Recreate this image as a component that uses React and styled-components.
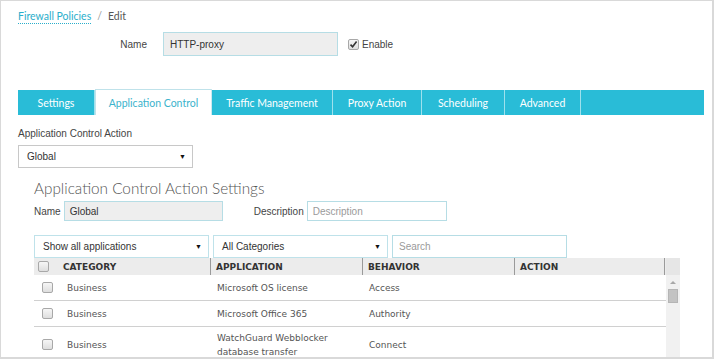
import React from "react";
import styled, { createGlobalStyle } from "styled-components";

const Global = createGlobalStyle`
  html, body { margin: 0; padding: 0; background: #fff; }
  body { font-family: "Liberation Sans", Arial, sans-serif; }
  * { box-sizing: border-box; }
`;

const Frame = styled.div`
  width: 714px;
  height: 359px;
  overflow: hidden;
  border: 2px solid #d9d9d9;
  border-top-width: 1px;
  border-left-width: 1px;
  padding: 9px 0 0 17px;
  background: #fff;
`;

const Breadcrumb = styled.div`
  font-family: Lato, sans-serif;
  font-size: 10.5px;
  line-height: 13px;
  color: #555;
  display: flex;
  gap: 6px;
`;

const Crumb = styled.a`
  color: #2aaecb;
  text-decoration: none;
  border-bottom: 1px dotted #2aaecb;
`;

const Sep = styled.span`
  color: #999;
`;

const NameRow = styled.div`
  display: flex;
  align-items: center;
  margin-top: 8px;
  height: 24px;
`;

const RightLabel = styled.label`
  width: 129px;
  text-align: right;
  font-size: 10px;
  color: #444;
  margin-right: 16px;
`;

const Input = styled.div`
  width: ${(p) => p.w}px;
  height: ${(p) => p.h}px;
  border: 1px solid #b6dde5;
  background: ${(p) => (p.disabled ? "#eeeeee" : "#fff")};
  font-size: 10px;
  color: ${(p) => (p.placeholder ? "#9a9a9a" : "#333")};
  display: flex;
  align-items: center;
  padding-left: ${(p) => p.pl || 6}px;
`;

const CheckLabel = styled.label`
  display: flex;
  align-items: center;
  gap: 3px;
  margin-left: 10px;
  font-size: 10px;
  color: #444;
`;

const Box = styled.span`
  display: inline-flex;
  align-items: center;
  justify-content: center;
  width: 11px;
  height: 11px;
  border: 1px solid #a8a8a8;
  border-radius: 2px;
  background: linear-gradient(#f6f6f6, #dedede);
  flex: none;
`;

const Checkbox = ({ checked }) => (
  <Box>
    {checked && (
      <svg width="9" height="9" viewBox="0 0 9 9">
        <path d="M1.5 4.6 L3.6 6.8 L7.6 1.6" fill="none" stroke="#333" strokeWidth="1.6" />
      </svg>
    )}
  </Box>
);

const TabBar = styled.div`
  margin-top: 34px;
  width: 686px;
  height: 25px;
  background: #29bcd7;
  display: flex;
`;

const Tab = styled.div`
  width: ${(p) => p.w}px;
  height: ${(p) => (p.active ? 26 : 25)}px;
  margin-top: ${(p) => (p.active ? -1 : 0)}px;
  display: flex;
  align-items: center;
  justify-content: center;
  font-family: Lato, sans-serif;
  font-size: 10.5px;
  color: ${(p) => (p.active ? "#3bb3cc" : "#fff")};
  background: ${(p) => (p.active ? "#fff" : "transparent")};
  border-right: 1px solid ${(p) => (p.active ? "#cfe9ef" : "rgba(255,255,255,0.55)")};
  border-top: ${(p) => (p.active ? "1px solid #bfe2ea" : "none")};
  border-left: ${(p) => (p.active ? "1px solid #bfe2ea" : "none")};
  padding-top: ${(p) => (p.active ? 1 : 0)}px;
`;

const FieldLabel = styled.div`
  margin-top: 13px;
  font-size: 10px;
  line-height: 12px;
  color: #444;
`;

const Select = styled.div`
  width: ${(p) => p.w}px;
  height: 23px;
  border: 1px solid ${(p) => p.border || "#c8c8c8"};
  background: #fff;
  display: flex;
  align-items: center;
  justify-content: space-between;
  padding: 0 6px 0 ${(p) => p.pl || 8}px;
  font-size: 10px;
  color: #333;
  margin-top: ${(p) => p.mt || 0}px;
`;

const Arrow = styled.span`
  font-size: 7px;
  color: #111;
`;

const Section = styled.div`
  padding-left: 16px;
`;

const Heading = styled.h2`
  margin: 10px 0 0;
  font-family: Lato, sans-serif;
  font-weight: 300;
  font-size: 15.3px;
  line-height: 20px;
  color: #555;
`;

const InlineRow = styled.div`
  display: flex;
  align-items: center;
  margin-top: ${(p) => p.mt}px;
  gap: ${(p) => p.gap || 0}px;
`;

const SmallLabel = styled.label`
  font-size: 10px;
  color: #444;
  margin-right: 3px;
  margin-left: ${(p) => p.ml || 0}px;
`;

const Table = styled.div`
  width: 646px;
  display: grid;
  grid-template-columns: 1fr 14px;
`;

const Rows = styled.div`
  display: flex;
  flex-direction: column;
`;

const COLS = "26px 151px 152px 152px 150px";

const HeadRow = styled.div`
  display: grid;
  grid-template-columns: ${COLS};
  height: 17px;
  background: #ececec;
  align-items: center;
`;

const HeadCell = styled.div`
  font-family: "DejaVu Sans", Verdana, sans-serif;
  font-weight: bold;
  font-size: 9px;
  color: #333;
  height: 17px;
  display: flex;
  align-items: center;
  padding-left: ${(p) => p.pl ?? 5}px;
  border-right: ${(p) => (p.divider ? "1px solid #9a9a9a" : "none")};
`;

const Row = styled.div`
  display: grid;
  grid-template-columns: ${COLS};
  height: ${(p) => p.h}px;
  align-items: center;
  border-bottom: 1px solid #d0d0d0;
`;

const Cell = styled.div`
  font-family: "DejaVu Sans", Verdana, sans-serif;
  font-size: 9px;
  line-height: 14px;
  color: #555;
  padding-left: ${(p) => p.pl ?? 6}px;
  display: flex;
  align-items: center;
  white-space: pre-line;
`;

const Scroll = styled.div`
  background: #f1f1f1;
  display: flex;
  flex-direction: column;
  align-items: center;
`;

const ScrollHead = styled.div`
  width: 100%;
  height: 17px;
  background: #e6e6e6;
`;

const UpArrow = styled.div`
  margin-top: 6px;
  width: 0;
  height: 0;
  border-left: 3px solid transparent;
  border-right: 3px solid transparent;
  border-bottom: 3px solid #a8a8a8;
`;

const Thumb = styled.div`
  margin-top: 5px;
  width: 10px;
  height: 14px;
  background: #c3c3c3;
  border: 1px solid #b5b5b5;
`;

const tabs = [
  ["Settings", 77],
  ["Application Control", 117, true],
  ["Traffic Management", 121],
  ["Proxy Action", 89],
  ["Scheduling", 83],
  ["Advanced", 76],
];

const data = [
  ["Business", "Microsoft OS license", "Access", 26],
  ["Business", "Microsoft Office 365", "Authority", 26],
  ["Business", "WatchGuard Webblocker\ndatabase transfer", "Connect", 36],
];

export default function App() {
  return (
    <>
      <Global />
      <Frame>
        <Breadcrumb>
          <Crumb>Firewall Policies</Crumb>
          <Sep>/</Sep>
          <span>Edit</span>
        </Breadcrumb>

        <NameRow>
          <RightLabel>Name</RightLabel>
          <Input w={175} h={24} disabled>HTTP-proxy</Input>
          <CheckLabel>
            <Checkbox checked />
            Enable
          </CheckLabel>
        </NameRow>

        <TabBar>
          {tabs.map(([t, w, a]) => (
            <Tab key={t} w={w} active={a}>
              {t}
            </Tab>
          ))}
        </TabBar>

        <FieldLabel>Application Control Action</FieldLabel>
        <Select w={175} mt={5}>
          Global
          <Arrow>▼</Arrow>
        </Select>

        <Section>
          <Heading>Application Control Action Settings</Heading>
          <InlineRow mt={3}>
            <SmallLabel>Name</SmallLabel>
            <Input w={159} h={20} disabled pl={5}>Global</Input>
            <SmallLabel ml={31}>Description</SmallLabel>
            <Input w={140} h={20} placeholder pl={5}>Description</Input>
          </InlineRow>

          <InlineRow mt={14} gap={4}>
            <Select w={175} border="#bfe2ea">
              Show all applications
              <Arrow>▼</Arrow>
            </Select>
            <Select w={175} border="#bfe2ea">
              All Categories
              <Arrow>▼</Arrow>
            </Select>
            <Input w={175} h={23} placeholder pl={6}>Search</Input>
          </InlineRow>

          <Table>
            <Rows>
              <HeadRow>
                <HeadCell pl={4}>
                  <Checkbox />
                </HeadCell>
                <HeadCell pl={3} divider>CATEGORY</HeadCell>
                <HeadCell divider>APPLICATION</HeadCell>
                <HeadCell divider>BEHAVIOR</HeadCell>
                <HeadCell divider>ACTION</HeadCell>
              </HeadRow>
              {data.map(([c, a, b, h], i) => (
                <Row key={i} h={h}>
                  <Cell pl={8}>
                    <Checkbox />
                  </Cell>
                  <Cell pl={7}>{c}</Cell>
                  <Cell>{a}</Cell>
                  <Cell>{b}</Cell>
                  <Cell />
                </Row>
              ))}
            </Rows>
            <Scroll>
              <ScrollHead />
              <UpArrow />
              <Thumb />
            </Scroll>
          </Table>
        </Section>
      </Frame>
    </>
  );
}
